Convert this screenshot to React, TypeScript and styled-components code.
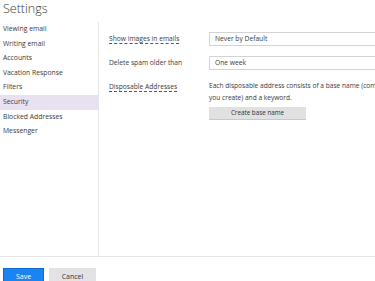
import React from "react";
import styled, { createGlobalStyle } from "styled-components";

const navItems = [
	"Viewing email",
	"Writing email",
	"Accounts",
	"Vacation Response",
	"Filters",
	"Security",
	"Blocked Addresses",
	"Messenger",
];

const App: React.FC = () => {
	return (
		<>
			<GlobalStyle />
			<Page>
				<Title>Settings</Title>
				<Body>
					<Sidebar>
						{navItems.map((item) => (
							<NavItem key={item} $active={item === "Security"}>
								{item}
							</NavItem>
						))}
					</Sidebar>
					<Main>
						<OptionGrid>
							<Label $dashed>Show images in emails</Label>
							<SelectBox>Never by Default</SelectBox>
							<Label>Delete spam older than</Label>
							<SelectBox>One week</SelectBox>
							<Label $dashed>Disposable Addresses</Label>
							<Disposable>
								<Description>
									Each disposable address consists of a base name (common to all addresses
									<br />
									you create) and a keyword.
								</Description>
								<GrayButton>Create base name</GrayButton>
							</Disposable>
						</OptionGrid>
					</Main>
				</Body>
				<Footer>
					<PrimaryButton>Save</PrimaryButton>
					<SecondaryButton>Cancel</SecondaryButton>
				</Footer>
			</Page>
		</>
	);
};

export default App;

const GlobalStyle = createGlobalStyle`
	html, body {
		margin: 0;
		padding: 0;
		background: #ffffff;
		overflow: hidden;
	}
	body {
		font-family: "Open Sans", "Noto Sans", sans-serif;
		color: #333333;
	}
`;

const Page = styled.div`
	width: 375px;
	height: 281px;
	overflow: hidden;
	display: flex;
	flex-direction: column;

	& > * {
		flex-shrink: 0;
	}
`;

const Title = styled.div`
	height: 22px;
	padding-left: 3px;
	font-size: 12.5px;
	font-weight: 300;
	line-height: 18px;
	color: #3a3a3a;
`;

const Body = styled.div`
	display: flex;
	height: 234px;
	border-bottom: 1px solid #e6e6e6;
`;

const Sidebar = styled.div`
	width: 98px;
	flex-shrink: 0;
	border-right: 1px solid #e6e6e6;
`;

const NavItem = styled.div<{ $active?: boolean }>`
	height: 14.6px;
	line-height: 14.6px;
	padding-left: 3px;
	font-size: 6.8px;
	color: #3a3a3a;
	background: ${(p) => (p.$active ? "#e9e1f2" : "transparent")};
`;

const Main = styled.div`
	flex: 1;
	min-width: 0;
	padding: 10px 0 0 10px;
`;

const OptionGrid = styled.div`
	display: grid;
	grid-template-columns: 100px 400px;
	row-gap: 10px;
	align-items: center;
`;

const Label = styled.div<{ $dashed?: boolean }>`
	align-self: start;
	padding-top: 1px;
	font-size: 6.7px;
	line-height: 12px;
	color: #3a3a3a;
	text-decoration: ${(p) => (p.$dashed ? "underline dashed #555" : "none")};
	text-underline-offset: 2px;
`;

const SelectBox = styled.div`
	height: 12px;
	border: 1px solid #d4d4d4;
	padding-left: 5px;
	font-size: 6.7px;
	line-height: 12px;
	color: #3a3a3a;
`;

const Disposable = styled.div`
	display: flex;
	flex-direction: column;
	align-items: flex-start;
`;

const Description = styled.div`
	font-size: 6.6px;
	line-height: 12px;
	white-space: nowrap;
	color: #3a3a3a;
`;

const GrayButton = styled.div`
	margin-top: 3px;
	width: 97px;
	height: 12px;
	background: #e1e1e1;
	border-bottom: 1px solid #c8c8c8;
	font-size: 6.3px;
	line-height: 12px;
	text-align: center;
	color: #333333;
`;

const Footer = styled.div`
	display: flex;
	gap: 5px;
	padding: 11px 0 0 3px;
`;

const PrimaryButton = styled.div`
	width: 39px;
	height: 16px;
	background: #1a84f2;
	border: 1px solid #0e6ad0;
	color: #ffffff;
	font-size: 7px;
	line-height: 16px;
	text-align: center;
`;

const SecondaryButton = styled.div`
	width: 47px;
	height: 18px;
	background: #e3e3e6;
	color: #333333;
	font-size: 7px;
	line-height: 17px;
	text-align: center;
`;
